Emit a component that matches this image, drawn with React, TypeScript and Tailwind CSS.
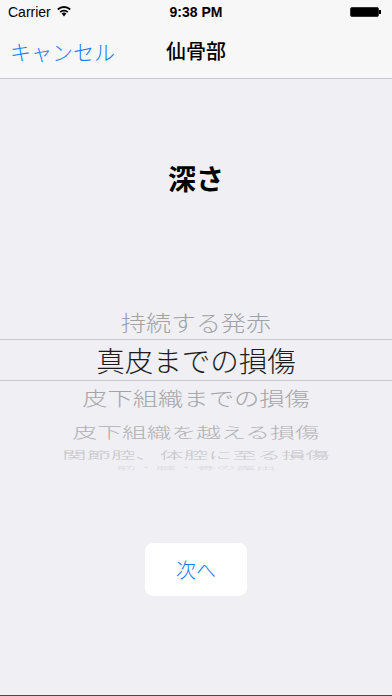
import React from 'react'

const jp = { fontFamily: '"Noto Sans CJK JP", "Noto Sans", sans-serif' }
const sys = { fontFamily: '"Liberation Sans", Arial, sans-serif' }

function Wifi() {
  return (
    <svg width="16" height="12" viewBox="0 0 16 12">
      <path d="M8 11.5 L5.6 8.6 A3.6 3.6 0 0 1 10.4 8.6 Z" fill="#000" />
      <path d="M3.6 6.4 A6.4 6.4 0 0 1 12.4 6.4 L11.2 7.8 A4.6 4.6 0 0 0 4.8 7.8 Z" fill="#000" />
      <path d="M1.2 3.8 A9.8 9.8 0 0 1 14.8 3.8 L13.6 5.2 A8 8 0 0 0 2.4 5.2 Z" fill="#000" />
    </svg>
  )
}

function Battery() {
  return (
    <div className="flex items-center">
      <div className="w-[29px] h-[10px] rounded-[2px] bg-black border border-[#333]" />
      <div className="w-[2px] h-[4px] bg-black" />
    </div>
  )
}

function Row({ text, h, pt = 0, size, color, sy }: { text: string; h: number; pt?: number; size: number; color: string; sy: number }) {
  return (
    <div className="flex items-center justify-center overflow-hidden" style={{ height: h, paddingTop: pt }}>
      <span
        className="inline-block whitespace-nowrap leading-none font-light"
        style={{ ...jp, fontSize: size, color, transform: `scaleY(${sy})` }}
      >
        {text}
      </span>
    </div>
  )
}

export default function App() {
  return (
    <div className="w-[392px] h-[696px] bg-[#efeff4] flex flex-col border-b border-[#4a4a4a] overflow-hidden">
      {/* status + nav */}
      <div className="bg-[#f7f7f7] border-b border-[#c8c7cc]">
        <div className="h-[24px] relative flex items-center px-[8px] text-[14px] text-black" style={sys}>
          <span>Carrier</span>
          <span className="ml-[5px] mt-[-2px]"><Wifi /></span>
          <span className="absolute left-0 right-0 text-center font-bold">9:38 PM</span>
          <span className="ml-auto mr-[3px]"><Battery /></span>
        </div>
        <div className="h-[54px] relative flex items-center px-[10px]">
          <span className="text-[21px] text-[#157efb] leading-none font-light" style={jp}>キャンセル</span>
          <span className="absolute left-0 right-0 text-center text-[20px] text-black font-medium leading-none" style={jp}>仙骨部</span>
        </div>
      </div>

      {/* body */}
      <div className="flex-1 flex flex-col">
        <div className="mt-[85px] h-[28px] text-center text-[28px] font-bold leading-[28px] text-black" style={jp}>深さ</div>

        <div className="mt-[108px]">
          <Row text="持続する発赤" h={39} pt={5} size={25} color="#a2a2a5" sy={0.85} />
          <div className="border-y border-[#c8c7cc]">
            <Row text="真皮までの損傷" h={40} size={28.5} color="#1c1c1c" sy={1} />
          </div>
          <Row text="皮下組織までの損傷" h={35} size={25.3} color="#a5a5a8" sy={0.75} />
          <Row text="皮下組織を越える損傷" h={30} size={24.8} color="#b1b1b4" sy={0.6} />
          <Row text="関節腔、体腔に至る損傷" h={18} size={24.3} color="#c6c6c9" sy={0.42} />
          <Row text="筋・腱・骨の露出" h={8} size={20} color="#dadadd" sy={0.2} />
        </div>

        <div className="mt-[71px] flex justify-center">
          <button className="w-[102px] h-[53px] bg-white rounded-[8px] text-[20px] text-[#157efb] font-light" style={jp}>
            次へ
          </button>
        </div>
      </div>
    </div>
  )
}
